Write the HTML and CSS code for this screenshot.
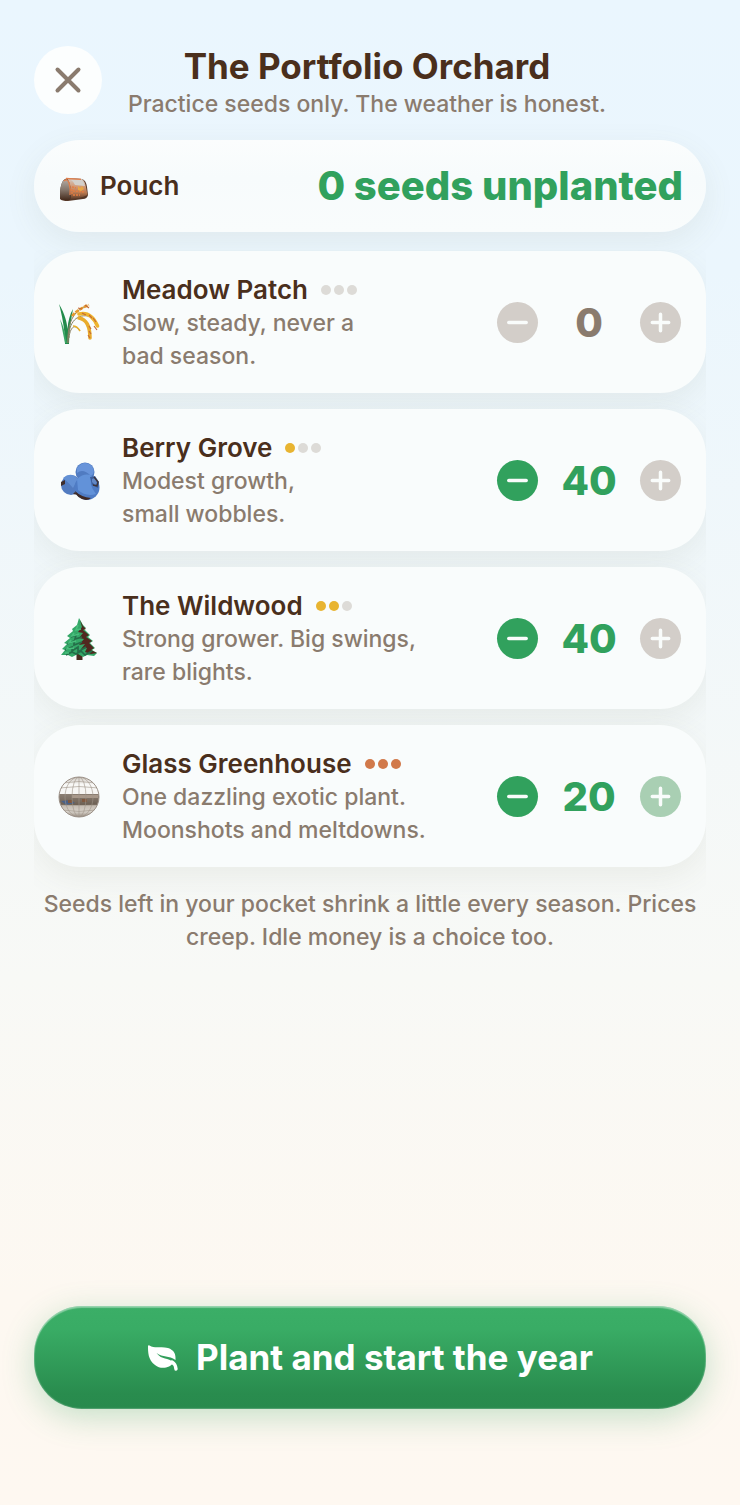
FILE: index.html
```html
<!DOCTYPE html>
<html lang="en">
<head>
<meta charset="utf-8">
<meta name="viewport" content="width=device-width, initial-scale=1">
<title>The Portfolio Orchard</title>
<link rel="stylesheet" href="styles.css">
</head>
<body>
<svg class="defs" aria-hidden="true">
  <symbol id="minus" viewBox="0 0 40 40"><path d="M11.500 20H28.500" fill="none" stroke="currentColor" stroke-width="3.400" stroke-linecap="round"/></symbol>
  <symbol id="plus" viewBox="0 0 40 40"><path d="M12 20H28M20 12V28" fill="none" stroke="currentColor" stroke-width="3.400" stroke-linecap="round"/></symbol>
</svg>
<main class="screen">
  <header class="header">
    <button class="close" type="button" aria-label="Close">
      <svg viewBox="0 0 28 28" aria-hidden="true"><path d="M3.500 3.500L24.500 24.500M24.500 3.500L3.500 24.500" fill="none" stroke="currentColor" stroke-width="4" stroke-linecap="round"/></svg>
    </button>
    <div class="heading">
      <h1 class="title">The Portfolio Orchard</h1>
      <p class="subtitle">Practice seeds only. The weather is honest.</p>
    </div>
  </header>

  <section class="pouch">
    <svg class="pouch-icon" viewBox="0 0 30 30" aria-hidden="true">
      <defs>
        <linearGradient id="bagFront" x1="0" y1="0" x2="0" y2="1"><stop offset="0" stop-color="#d2cec9"/><stop offset=".4" stop-color="#d39a77"/><stop offset=".7" stop-color="#b97950"/><stop offset="1" stop-color="#5c3b29"/></linearGradient>
        <linearGradient id="bagSide" x1="0" y1="0" x2="0" y2="1"><stop offset="0" stop-color="#b3aaa2"/><stop offset=".5" stop-color="#85766b"/><stop offset="1" stop-color="#452b1d"/></linearGradient>
      </defs>
      <path d="M6 4Q8 3 12 3L23 4Q27 5 28 12L29 20Q28 24 24 24L9 26Q3 26 1 24V17Q2 6 6 4Z" fill="#553727"/>
      <path d="M5 5Q9 3 11 10Q12 16 11 25L4 25Q1 24 1 22V17Q2 7 5 5Z" fill="url(#bagSide)"/>
      <path d="M8 3L23 4Q26 6 27 12L28.500 20Q20 24 12 24Q13 10 8 3Z" fill="url(#bagFront)"/>
      <path d="M11 4L23 5Q25 7 26 11L16 10Q14 6 11 4Z" fill="#d3d0cb"/>
      <path d="M5 6Q8 3 10 8Q12 14 11 20M7 3.500L22 4.300" fill="none" stroke="#e07f4c" stroke-width="1.300"/>
      <path d="M13 12L17 13M14 16L26 17M14 20L21 20M13 14V19" fill="none" stroke="#e57c40" stroke-width="1.300" stroke-dasharray="2 1"/>
      <path d="M19 11l2 2 2-2 2 3-3 2-3-1z" fill="#e8a746"/>
    </svg>
    <h2 class="pouch-label">Pouch</h2>
    <output class="pouch-total">0 seeds unplanted</output>
  </section>

  <div class="scroll">
    <ul class="plots">
      <li class="plot">
        <svg class="plot-icon" viewBox="0 0 42 42" aria-hidden="true">
          <path d="M7 42C7 28 4 13 1 2C7 12 9 21 9.500 27C10 19 12 12 15 7C13 18 11 30 11 42Z" fill="#228b4b"/>
          <path d="M2 17C6 25 7 32 9 41H7C5 32 4 25 2 17Z" fill="#3aa564"/>
          <path d="M10 41C9 22 15 9 28 4M10 41C10 22 17 12 30 14M11 36C12 25 17 21 22 29" fill="none" stroke="#8a8064" stroke-width="1"/>
          <path d="M14 14Q20 7 31 3" fill="none" stroke="#e79a2d" stroke-width="2.600" stroke-dasharray="4 1"/>
          <path d="M21 12Q33 9 39.500 24" fill="none" stroke="#efb42d" stroke-width="3.600" stroke-linecap="round"/>
          <path d="M21 16Q32 18 32 36" fill="none" stroke="#e9ac2d" stroke-width="3.600" stroke-linecap="round"/>
          <path d="M24 11l4 2m3 0l3 3m1 0l3 4m-7 4l2 3m-2 2l2 3m-3 1l2 3m4-12l3 4M20 6l4 1m3-4l4 3" fill="none" stroke="#c56b36" stroke-width="1.200"/>
          <path d="M15 24Q19 24 22 29" fill="none" stroke="#e7b02e" stroke-width="1.600"/>
        </svg>
        <div class="plot-text">
          <h3 class="plot-name">Meadow Patch <span class="risk" role="img" aria-label="Risk 0 of 3"><i class="dot"></i><i class="dot"></i><i class="dot"></i></span></h3>
          <p class="plot-info">Slow, steady, never a<br>bad season.</p>
        </div>
        <div class="stepper">
          <button class="step off" type="button" aria-label="Fewer seeds in Meadow Patch" disabled><svg aria-hidden="true"><use href="#minus"/></svg></button>
          <output class="count none">0</output>
          <button class="step off" type="button" aria-label="More seeds in Meadow Patch" disabled><svg aria-hidden="true"><use href="#plus"/></svg></button>
        </div>
      </li>

      <li class="plot">
        <svg class="plot-icon" viewBox="0 0 42 42" aria-hidden="true">
          <circle cx="13" cy="25" r="10" fill="#527bc0"/>
          <path d="M3 22l4-2 0 4-4 2zM15 34l4-4 1 5z" fill="#402e2c"/>
          <path d="M5 18Q13 11 20 19L15 28Q10 22 5 18Z" fill="#6390d4"/>
          <circle cx="27" cy="12" r="9.500" fill="#507bc1"/>
          <path d="M19 8Q26 -1 34 6Q38 13 33 16Q25 8 19 13Z" fill="#6894da"/>
          <circle cx="29" cy="27.500" r="12.500" fill="#4f7cc5"/>
          <path d="M17 31Q19 39 28 40Q31 40 33 38Q23 37 17 31Z" fill="#3f2924"/>
          <path d="M19 19Q27 12 34 16Q30 24 38 34Q28 37 20 30Z" fill="#6292d9"/>
          <path d="M32 17L37 16L41 22L40 28L34 25Z" fill="#3d5e9b"/>
          <path d="M34 19L37 18L39 23L37 25L34 22Z" fill="#6288c6"/>
          <path d="M36 17l4 5-1 4-4-1" fill="none" stroke="#3f3437" stroke-width="1.300"/>
        </svg>
        <div class="plot-text">
          <h3 class="plot-name">Berry Grove <span class="risk" role="img" aria-label="Risk 1 of 3"><i class="dot low"></i><i class="dot"></i><i class="dot"></i></span></h3>
          <p class="plot-info">Modest growth,<br>small wobbles.</p>
        </div>
        <div class="stepper">
          <button class="step" type="button" aria-label="Fewer seeds in Berry Grove"><svg aria-hidden="true"><use href="#minus"/></svg></button>
          <output class="count">40</output>
          <button class="step off" type="button" aria-label="More seeds in Berry Grove" disabled><svg aria-hidden="true"><use href="#plus"/></svg></button>
        </div>
      </li>

      <li class="plot">
        <svg class="plot-icon" viewBox="0 0 42 42" aria-hidden="true">
          <path d="M18.500 33H24.500V42H18.500Z" fill="#4a2c20"/>
          <path d="M21 0L25 7L28 10L26 11L32 17L30 19L35 23L32 25L37 30L34 32L39 35L36 38L29 37L25 39L20 36L14 39L10 37L3 37L7 32L4 31L9 26L6 25L12 20L9 18L15 13L14 11L19 7Z" fill="#35a868"/>
          <path d="M22 2L25 8L28 11L25 12L31 17L28 19L34 23L31 25L36 30L33 32L39 35L33 36L27 34L29 30L23 31L27 26L21 27L26 21L21 20L25 15L20 14L24 9Z" fill="#51271f"/>
          <path d="M13 19L18 17L17 21L24 19M9 26L16 23L16 27L24 24M7 32L14 29L14 33L20 29L20 34L28 29M8 37L14 34L18 36L23 33L27 37L34 33" fill="none" stroke="#256d49" stroke-width="1.700"/>
          <path d="M20 7L18 12L23 11M16 15L14 18L21 16M13 22L11 25L18 23M10 29L9 31L16 30M7 35L11 35" fill="none" stroke="#48bf7c" stroke-width="1.600"/>
        </svg>
        <div class="plot-text">
          <h3 class="plot-name">The Wildwood <span class="risk" role="img" aria-label="Risk 2 of 3"><i class="dot low"></i><i class="dot low"></i><i class="dot"></i></span></h3>
          <p class="plot-info">Strong grower. Big swings,<br>rare blights.</p>
        </div>
        <div class="stepper">
          <button class="step" type="button" aria-label="Fewer seeds in The Wildwood"><svg aria-hidden="true"><use href="#minus"/></svg></button>
          <output class="count">40</output>
          <button class="step off" type="button" aria-label="More seeds in The Wildwood" disabled><svg aria-hidden="true"><use href="#plus"/></svg></button>
        </div>
      </li>

      <li class="plot">
        <svg class="plot-icon" viewBox="0 0 42 42" aria-hidden="true">
          <defs>
            <clipPath id="ballClip"><circle cx="21" cy="21" r="20"/></clipPath>
            <linearGradient id="ballFill" x1="0" y1="0" x2="0" y2="1"><stop offset="0" stop-color="#cbc4bc"/><stop offset=".2" stop-color="#f8f8f6"/><stop offset=".42" stop-color="#f6f5f3"/><stop offset=".43" stop-color="#8b7e72"/><stop offset=".68" stop-color="#6d6054"/><stop offset=".7" stop-color="#c4bbb1"/><stop offset=".85" stop-color="#d6d0c8"/><stop offset="1" stop-color="#8d8175"/></linearGradient>
          </defs>
          <g clip-path="url(#ballClip)">
            <path d="M0 0H42V42H0Z" fill="url(#ballFill)"/>
            <path d="M3 25L12 24L17 27L8 29Z" fill="#4a6187"/>
            <path d="M14 19H40V22H14Z" fill="#a8988a"/>
            <path d="M10 24H14V27H10ZM24 23H29V26H24Z" fill="#7f583f"/>
            <g fill="none" stroke="#a0958a" stroke-width=".6"><path d="M21 1V41M1 12Q21 9 41 12M4 7Q21 4 38 7M1 29Q21 30 41 29M4 34Q21 37 38 34"/><ellipse cx="21" cy="21" rx="7" ry="20"/><ellipse cx="21" cy="21" rx="14" ry="20"/></g>
          </g>
          <circle cx="21" cy="21" r="20" fill="none" stroke="#9b9087" stroke-width="1"/>
        </svg>
        <div class="plot-text">
          <h3 class="plot-name">Glass Greenhouse <span class="risk" role="img" aria-label="Risk 3 of 3"><i class="dot high"></i><i class="dot high"></i><i class="dot high"></i></span></h3>
          <p class="plot-info">One dazzling exotic plant.<br>Moonshots and meltdowns.</p>
        </div>
        <div class="stepper">
          <button class="step" type="button" aria-label="Fewer seeds in Glass Greenhouse"><svg aria-hidden="true"><use href="#minus"/></svg></button>
          <output class="count">20</output>
          <button class="step faded" type="button" aria-label="More seeds in Glass Greenhouse" disabled><svg aria-hidden="true"><use href="#plus"/></svg></button>
        </div>
      </li>
    </ul>
    <p class="note">Seeds left in your pocket shrink a little every season. Prices creep. Idle money is a choice too.</p>
  </div>

  <button class="start" type="button">
    <svg class="leaf" viewBox="0 0 32 28" aria-hidden="true">
      <path d="M2.500 1.500C8 5 14 2 21 4C27 6 29 10 28.500 16C22 11 16 14 9.500 9C15 16.500 21 13 26.500 18.500C23 24 14 26 8 21C1 16 1 8 1 2Q1.300 .8 2.500 1.500Z" fill="currentColor"/>
      <path d="M25 18Q28.500 20 29 25" fill="none" stroke="currentColor" stroke-width="3.400" stroke-linecap="round"/>
    </svg>
    Plant and start the year
  </button>
</main>
</body>
</html>
```

FILE: styles.css
```css
* {
  box-sizing: border-box;
}

body {
  margin: 0;
  font-family: Inter, "Liberation Sans", sans-serif;
  color: #4a2f1c;
  background: linear-gradient(180deg, #eaf6fe 0%, #ebf6fd 18%, #f8f9f6 65%, #fdf8f1 86%, #fef8f1 100%);
}

h1,
h2,
h3,
p,
ul {
  margin: 0;
  padding: 0;
}

button {
  border: 0;
  padding: 0;
  font: inherit;
}

.defs {
  display: none;
}

.screen {
  display: flex;
  flex-direction: column;
  min-height: 100vh;
  padding: 46px 34px 96px;
}

.header {
  display: grid;
  grid-template-columns: 68px 1fr 74px;
  align-items: start;
}

.close {
  display: grid;
  place-items: center;
  width: 68px;
  height: 68px;
  border-radius: 50%;
  color: #8a7b6e;
  background: #fcfefe;
}

.close svg {
  width: 28px;
  height: 28px;
}

.heading {
  text-align: center;
  white-space: nowrap;
}

.title {
  font-size: 35px;
  line-height: 40px;
  font-weight: 700;
}

.subtitle {
  font-size: 23px;
  line-height: 36px;
  font-weight: 500;
  color: #8a7b6e;
}

.pouch {
  display: flex;
  align-items: center;
  margin-top: 18px;
  padding: 20px 23px 20px 24px;
  border-radius: 46px;
  background: linear-gradient(180deg, #fbfdfd, #f7fbfc 40%, #f9fcfc);
  box-shadow: 0 10px 32px rgba(110, 110, 80, 0.09);
}

.pouch-icon {
  width: 30px;
  height: 30px;
  margin: 8px 11px 0 1px;
}

.pouch-label {
  font-size: 26px;
  line-height: 34px;
  font-weight: 600;
}

.pouch-total {
  margin-left: auto;
  font-size: 40px;
  line-height: 52px;
  font-weight: 800;
  color: #31a15d;
}

.scroll {
  flex: 1;
  margin-top: 18px;
  padding-top: 1px;
  overflow: hidden;
}

.plots {
  display: flex;
  flex-direction: column;
  gap: 16px;
  list-style: none;
}

.plot {
  display: flex;
  align-items: center;
  gap: 22px;
  padding: 21px 25px 20px 24px;
  border-radius: 46px;
  background: #f9fcfc;
  box-shadow: 0 10px 32px rgba(110, 110, 80, 0.09);
}

.plot-icon {
  flex: none;
  width: 42px;
  height: 42px;
}

.plot-text {
  flex: 1;
}

.plot-name {
  display: flex;
  align-items: center;
  gap: 13px;
  font-size: 26px;
  line-height: 35px;
  font-weight: 600;
}

.risk {
  display: flex;
  gap: 3px;
}

.dot {
  width: 10px;
  height: 10px;
  border-radius: 50%;
  background: #dddbd7;
}

.dot.low {
  background: #e8b431;
}

.dot.high {
  background: #d1794a;
}

.plot-info {
  font-size: 23px;
  line-height: 33px;
  font-weight: 500;
  color: #8a7b6e;
}

.stepper {
  display: flex;
  align-items: center;
}

.step {
  width: 41px;
  height: 41px;
  border-radius: 50%;
  color: #f9fcfb;
  background: #31a15d;
}

.step svg {
  display: block;
  width: 100%;
  height: 100%;
}

.step.off {
  background: #d3cec9;
}

.step.faded {
  background: #a9cfb3;
}

.count {
  width: 102px;
  text-align: center;
  font-size: 40px;
  line-height: 48px;
  font-weight: 800;
  color: #31a15d;
}

.count.none {
  color: #8a7b6e;
}

.note {
  margin-top: 21px;
  text-align: center;
  font-size: 23px;
  line-height: 33px;
  font-weight: 500;
  color: #8a7b6e;
}

.start {
  display: flex;
  align-items: center;
  justify-content: center;
  gap: 17px;
  padding: 28px 24px;
  border-radius: 48px;
  font-size: 35px;
  line-height: 47px;
  font-weight: 700;
  color: #fff;
  background: linear-gradient(180deg, #3bae67 0%, #39ac65 22%, #298c4e 85%, #288a4d 100%);
  box-shadow: inset 0 2px 1px rgba(255, 255, 255, 0.35), inset 0 0 1px 1px rgba(255, 255, 255, 0.2), 0 8px 32px rgba(49, 161, 93, 0.28);
}

.leaf {
  width: 32px;
  height: 28px;
}
```
